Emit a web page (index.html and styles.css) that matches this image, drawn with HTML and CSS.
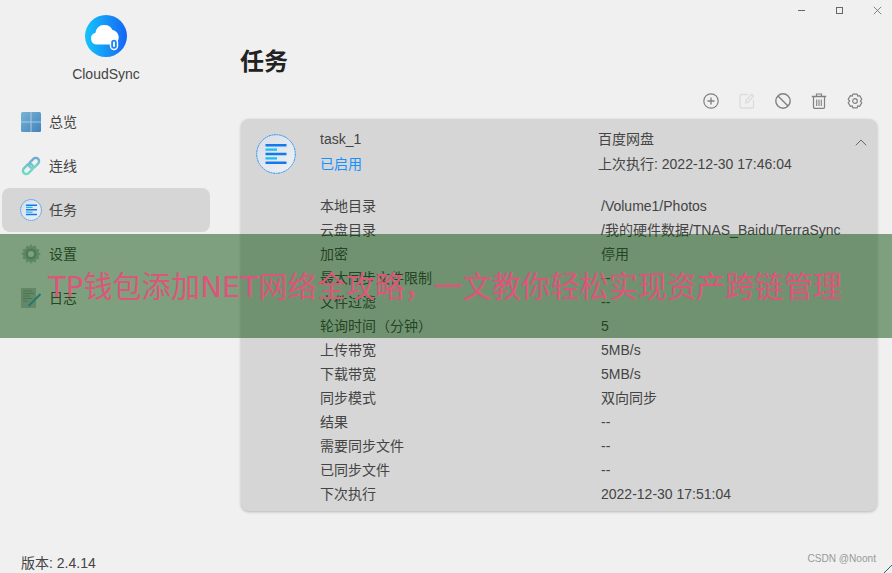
FILE: index.html
```html
<!DOCTYPE html>
<html lang="zh-CN">
<head>
<meta charset="utf-8">
<title>CloudSync</title>
<link rel="stylesheet" href="styles.css">
</head>
<body>
<svg class="defs" width="0" height="0" aria-hidden="true">
  <defs>
    <linearGradient id="gLogo" x1="0" y1="0" x2="1" y2="0"><stop offset="0" stop-color="#14c4fb"/><stop offset="1" stop-color="#1566f5"/></linearGradient>
    <linearGradient id="gGrid" x1="0" y1="0" x2="1" y2="1"><stop offset="0" stop-color="#7ab4d6"/><stop offset="1" stop-color="#4183bb"/></linearGradient>
    <linearGradient id="gLink" x1="0" y1="1" x2="1" y2="0"><stop offset="0" stop-color="#6fe0c0"/><stop offset="1" stop-color="#6fc0cc"/></linearGradient>
    <linearGradient id="gLink2" x1="0" y1="1" x2="1" y2="0"><stop offset="0" stop-color="#7ad8c8"/><stop offset="1" stop-color="#69a4d6"/></linearGradient>
    <linearGradient id="gDisc" x1="0" y1="0" x2="1" y2="1"><stop offset="0" stop-color="#d8dee6"/><stop offset="1" stop-color="#eef2f6"/></linearGradient>
  </defs>
</svg>
<div class="app">
  <aside class="sidebar">
    <div class="brand">
      <svg class="logo" viewBox="0 0 42 42">
        <circle cx="21" cy="21" r="21" fill="url(#gLogo)"/>
        <path d="M12 29.500a6 6 0 0 1-1.500-11.800 9 9 0 0 1 17-2.700 7.500 7.500 0 0 1 5 11.500l-2 3z" fill="#fff"/>
        <rect x="25.500" y="24" width="7" height="10.500" rx="3.500" fill="#1a86f8" stroke="#fff" stroke-width="1.400"/>
        <rect x="28" y="26.500" width="2" height="5.500" rx="1" fill="#fff"/>
      </svg>
      <div class="brand-name">CloudSync</div>
    </div>
    <nav class="nav">
      <a class="nav-item">
        <svg class="nav-icon" viewBox="0 0 20 20"><rect width="20" height="20" rx="1.500" fill="url(#gGrid)"/><path d="M10 0v20M0 10h20" stroke="#b4d0e4" stroke-width=".9"/></svg>
        <span>总览</span>
      </a>
      <a class="nav-item">
        <svg class="nav-icon" viewBox="0 0 20 20" fill="none" stroke-width="2.400"><rect x="1.200" y="9.700" width="11.500" height="6.600" rx="3.300" transform="rotate(-45 7 13)" stroke="url(#gLink)"/><rect x="7.300" y="3.700" width="11.500" height="6.600" rx="3.300" transform="rotate(-45 13 7)" stroke="url(#gLink2)"/></svg>
        <span>连线</span>
      </a>
      <a class="nav-item active">
        <svg class="nav-icon wide" viewBox="0 0 22 22"><circle cx="11" cy="11" r="10.400" fill="url(#gDisc)" stroke="#1a8cf5" stroke-width=".8" stroke-dasharray="1.500 .5"/><path d="M6 5.500h11v1.500H6zM6 14.800h11v1.500H6zM6 10h11v1.500H6z" fill="#1478ee"/><path d="M6 7.800h6.500v1.300H6zM6 12.500h6.500v1.300H6z" fill="#15c0f6"/></svg>
        <span>任务</span>
      </a>
      <a class="nav-item">
        <svg class="nav-icon" viewBox="0 0 20 20"><path d="M10 0l1.800 2.600 3-1 .5 3.100 3.100.5-1 3L20 10l-2.600 1.800 1 3-3.100.5-.5 3.100-3-1L10 20l-1.800-2.600-3 1-.5-3.100-3.100-.5 1-3L0 10l2.600-1.800-1-3 3.100-.5.5-3.100 3 1z" fill="#b2c2bc"/><circle cx="10" cy="10" r="5.500" fill="#94a8a4"/><circle cx="10" cy="10" r="3" fill="#f2f2f2"/></svg>
        <span>设置</span>
      </a>
      <a class="nav-item">
        <svg class="nav-icon" viewBox="0 0 20 20"><rect x="0" y="0" width="15" height="20" fill="#bcc2c2"/><path d="M2 3h9M2 5.500h11M2 8h7M2 10.500h9M2 13h5" stroke="#8a9a94" stroke-width=".9"/><path d="M7.500 18 19.500 6" stroke="#4aa0d8" stroke-width="2"/></svg>
        <span>日志</span>
      </a>
    </nav>
    <div class="version">版本: 2.4.14</div>
  </aside>
  <main class="main">
    <div class="titlebar">
      <svg class="win-icon" viewBox="0 0 9 9"><path d="M1 4.500h7" stroke="#666" stroke-width="1"/></svg>
      <svg class="win-icon" viewBox="0 0 9 9"><rect x="1.500" y="1.500" width="6" height="6" fill="none" stroke="#666" stroke-width="1"/></svg>
      <svg class="win-icon" viewBox="0 0 9 9"><path d="M.8.8l7.400 7.400M8.200.8.8 8.200" stroke="#666" stroke-width=".8" fill="none"/></svg>
    </div>
    <h1 class="page-title">任务</h1>
    <div class="toolbar">
      <svg class="tool" viewBox="0 0 16 16" fill="none" stroke="#808080" stroke-width="1.200"><circle cx="8" cy="8" r="7.200"/><path d="M8 4.500v7M4.500 8h7" stroke-width="1.300"/></svg>
      <svg class="tool" viewBox="0 0 16 16" fill="none" stroke="#dcdcdc" stroke-width="1.300"><path d="M9 1.500H2a1 1 0 0 0-1 1v11.500a1 1 0 0 0 1 1h11.500a1 1 0 0 0 1-1V7"/><path d="M6.500 9.800 7 7.500 12.500 1.200l2 1.800L9 9.300z"/></svg>
      <svg class="tool" viewBox="0 0 16 16" fill="none" stroke="#808080" stroke-width="1.400"><circle cx="8" cy="8" r="7.200"/><path d="M3 3l10 10"/></svg>
      <svg class="tool" viewBox="0 0 16 16" fill="none" stroke="#808080" stroke-width="1.200"><path d="M.8 3.500h14.400" stroke-width="1.500"/><path d="M5.500 3.200V1h5v2.200M2.500 4v10.300a1 1 0 0 0 1 1h9a1 1 0 0 0 1-1V4"/><path d="M5.700 6.500v6.500M8 6.500v6.500M10.300 6.500v6.500" stroke-width="1.100"/></svg>
      <svg class="tool" viewBox="0 0 16 16" fill="none" stroke="#808080" stroke-width="1.200"><path d="M5.800 1.200h4.400l.5 2 1.900-.6 2.200 3.700-1.400 1.500v.4l1.400 1.500-2.200 3.700-1.900-.6-.5 2H5.800l-.5-2-1.900.6-2.200-3.700 1.400-1.500v-.4L1.200 6.300l2.200-3.700 1.900.6z" stroke-linejoin="round"/><circle cx="8" cy="8" r="2.300"/></svg>
    </div>
    <section class="card">
      <header class="card-head">
        <svg class="task-icon" viewBox="0 0 40 40"><circle cx="20" cy="20" r="19.300" fill="url(#gDisc)" stroke="#1a8cf5" stroke-width=".9" stroke-dasharray="2 .6"/><path d="M9.500 10h21v2.400h-21zM9.500 18.800h21v2.400h-21zM9.500 27.600h21V30h-21z" fill="#1478ee"/><path d="M9.500 14.400h11.500v2.400H9.500zM9.500 23.200h11.500v2.400H9.500z" fill="#15c0f6"/></svg>
        <div class="head-left">
          <div class="head-line">task_1</div>
          <div class="head-line enabled">已启用</div>
        </div>
        <div class="head-right">
          <div class="head-line">百度网盘</div>
          <div class="head-line">上次执行: 2022-12-30 17:46:04</div>
        </div>
        <svg class="chevron" viewBox="0 0 12 7"><path d="M.8 6.300 6 1l5.200 5.300" fill="none" stroke="#666" stroke-width="1"/></svg>
      </header>
      <dl class="details">
        <div class="row"><dt>本地目录</dt><dd>/Volume1/Photos</dd></div>
        <div class="row"><dt>云盘目录</dt><dd>/我的硬件数据/TNAS_Baidu/TerraSync</dd></div>
        <div class="row"><dt>加密</dt><dd>停用</dd></div>
        <div class="row"><dt>最大同步文件限制</dt><dd>--</dd></div>
        <div class="row"><dt>文件过滤</dt><dd>--</dd></div>
        <div class="row"><dt>轮询时间（分钟）</dt><dd>5</dd></div>
        <div class="row"><dt>上传带宽</dt><dd>5MB/s</dd></div>
        <div class="row"><dt>下载带宽</dt><dd>5MB/s</dd></div>
        <div class="row"><dt>同步模式</dt><dd>双向同步</dd></div>
        <div class="row"><dt>结果</dt><dd>--</dd></div>
        <div class="row"><dt>需要同步文件</dt><dd>--</dd></div>
        <div class="row"><dt>已同步文件</dt><dd>--</dd></div>
        <div class="row"><dt>下次执行</dt><dd>2022-12-30 17:51:04</dd></div>
      </dl>
    </section>
  </main>
</div>
<div class="banner"><span>TP钱包添加NET网络全攻略，一文教你轻松实现资产跨链管理</span></div>
<div class="watermark">CSDN @Noont</div>
<svg class="grip" viewBox="0 0 8 8"><path d="M0 8 8 0" stroke="#3a5a7a" stroke-width="1"/></svg>
</body>
</html>
```
FILE: styles.css
```css
* { box-sizing: border-box; }
html, body { margin: 0; padding: 0; height: 100%; overflow: hidden; }
body {
  background: #f0f0f0;
  color: #444;
  font-family: "Liberation Sans", "Noto Sans CJK SC", sans-serif;
  font-size: 14px;
  position: relative;
}
.defs { position: absolute; }
.app { display: flex; height: 573px; }
.sidebar { width: 240px; flex: none; display: flex; flex-direction: column; padding: 15px 30px 0 2px; }
.brand { display: flex; flex-direction: column; align-items: center; height: 85px; }
.logo { width: 42px; height: 42px; }
.brand-name { margin-top: 8px; line-height: 18px; }
.nav { display: flex; flex-direction: column; }
.nav-item { display: flex; align-items: center; height: 44px; padding-left: 19px; gap: 8px; border-radius: 8px; }
.nav-item span { margin-bottom: 2px; }
.nav-item.active { background: #d6d6d6; }
.nav-icon { width: 20px; height: 20px; flex: none; }
.nav-icon.wide { width: 22px; height: 22px; margin: 0 -1px; }
.version { margin-top: auto; padding-left: 19px; line-height: 20px; height: 20px; }
.main { flex: 1; min-width: 0; padding-right: 15px; display: flex; flex-direction: column; }
.titlebar { display: flex; justify-content: flex-end; align-items: center; gap: 29px; height: 20px; margin-right: -5px; }
.win-icon { width: 9px; height: 9px; }
.page-title { margin: 26px 0 0; font-size: 24px; line-height: 32px; font-weight: 700; color: #222; }
.toolbar { display: flex; justify-content: flex-end; gap: 20px; margin-top: 15px; padding-right: 14px; height: 16px; }
.tool { width: 16px; height: 16px; }
.card { margin-top: 10px; margin-left: 1px; height: 392px; background: #d6d6d6; border-radius: 8px; box-shadow: 0 1px 3px rgba(0,0,0,.25); padding: 8px 0 0 15px; }
.card-head { display: flex; position: relative; height: 67px; }
.task-icon { width: 40px; height: 40px; margin-top: 7px; flex: none; }
.head-left { margin-left: 24px; width: 278px; }
.head-line { line-height: 24px; }
.head-line + .head-line { margin-top: 1px; }
.enabled { color: #1890ff; }
.chevron { position: absolute; right: 10px; top: 12px; width: 12px; height: 7px; }
.details { margin: 0 0 0 64px; }
.row { display: flex; line-height: 24px; height: 24px; }
.row dt { width: 281px; flex: none; }
.row dd { margin: 0; }
.banner {
  position: absolute; left: 0; right: 0; top: 234px; height: 104px;
  background: rgba(0, 70, 0, .47);
  display: flex; align-items: center; padding: 2px 0 0 48px;
  color: #dc5679; font-size: 29.200px; line-height: 40px; white-space: nowrap;
  font-family: "DejaVu Sans", "Noto Sans CJK SC", sans-serif;
}
.watermark { position: absolute; right: 16px; top: 552px; font-size: 10.100px; line-height: 14px; color: #999; }
.grip { position: absolute; right: 0; bottom: 0; width: 8px; height: 8px; }
```
